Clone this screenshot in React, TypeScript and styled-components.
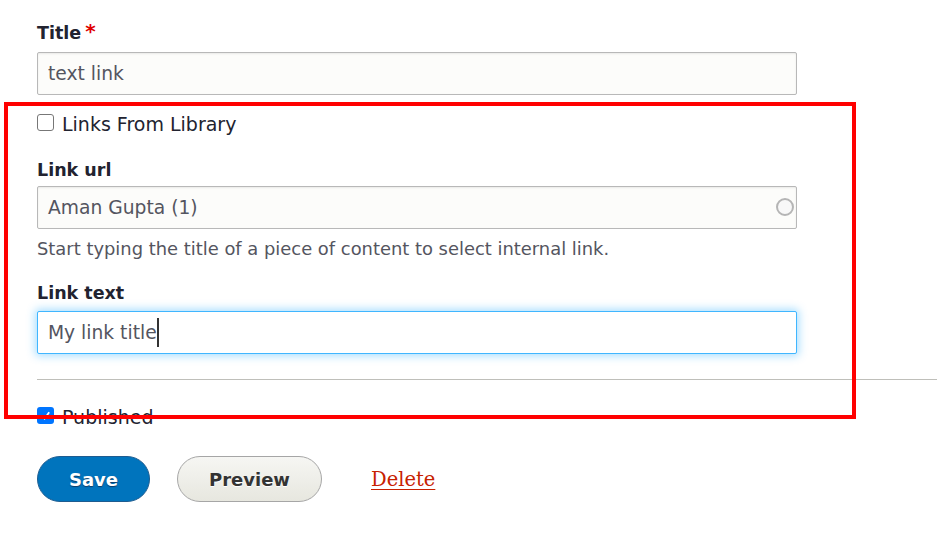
import React from "react";
import styled, { createGlobalStyle } from "styled-components";

const Global = createGlobalStyle`
  html, body { margin: 0; padding: 0; background: #fff; }
  body { font-family: "DejaVu Sans", "Liberation Sans", sans-serif; color: #222330; }
`;

const Page = styled.div`
  position: relative;
  width: 937px;
  height: 553px;
  overflow: hidden;
  padding: 21px 0 0 37px;
  box-sizing: border-box;
`;

const Field = styled.div<{ $mt?: number }>`
  display: flex;
  flex-direction: column;
  margin-top: ${(p) => p.$mt ?? 0}px;
`;

const Label = styled.label`
  font-size: 17.5px;
  font-weight: bold;
  line-height: 24px;
  color: #222330;
  display: flex;
  align-items: flex-start;
  gap: 4px;
`;

const Required = styled.span`
  color: #e00000;
  font-size: 20px;
  line-height: 20px;
`;

const InputBox = styled.div<{ $focus?: boolean; $mt: number }>`
  position: relative;
  width: 760px;
  height: 43px;
  box-sizing: border-box;
  margin-top: ${(p) => p.$mt}px;
  border: 1px solid ${(p) => (p.$focus ? "#40b6ff" : "#b8b8b8")};
  border-radius: 2px;
  background: ${(p) => (p.$focus ? "#fff" : "#fcfcfa")};
  box-shadow: ${(p) =>
    p.$focus ? "0 0 8px 2px rgba(64,182,255,0.45)" : "inset 0 1px 2px rgba(0,0,0,0.08)"};
  display: flex;
  align-items: center;
  padding: 0 10px;
  font-size: 18.7px;
  color: #545560;
`;

const Caret = styled.span`
  display: inline-block;
  width: 2px;
  height: 29px;
  background: #333;
`;

const Spinner = styled.span`
  position: absolute;
  right: 2px;
  top: 50%;
  margin-top: -10px;
  width: 14px;
  height: 14px;
  border: 2.5px solid #b5b5b5;
  border-radius: 50%;
  background: #f8f8f8;
`;

const CheckRow = styled.div<{ $mt: number }>`
  display: flex;
  align-items: center;
  gap: 8px;
  margin-top: ${(p) => p.$mt}px;
  font-size: 19px;
  color: #222330;
  line-height: 22px;
`;

const Box = styled.span<{ $checked?: boolean }>`
  width: 17px;
  height: 17px;
  box-sizing: border-box;
  border-radius: 3px;
  margin-bottom: 4px;
  border: ${(p) => (p.$checked ? "none" : "1.5px solid #777")};
  background: ${(p) => (p.$checked ? "#0075ff" : "#fff")};
  display: inline-flex;
  align-items: center;
  justify-content: center;
  flex: none;
`;

const Description = styled.div`
  margin-top: 9px;
  font-size: 17.9px;
  line-height: 22px;
  color: #545560;
`;

const Rule = styled.div`
  height: 1px;
  background: #bfbfba;
  margin-top: 25px;
`;

const Actions = styled.div`
  display: flex;
  align-items: center;
  margin-top: 28px;
`;

const Button = styled.button<{ $primary?: boolean }>`
  height: 46px;
  border-radius: 23px;
  font-family: "DejaVu Sans", sans-serif;
  font-weight: bold;
  font-size: 18px;
  padding: 0;
  margin-right: 27px;
  cursor: pointer;
  ${(p) =>
    p.$primary
      ? `width: 113px; background: #0074bd; color: #fff; border: 1px solid #1e5c90; text-shadow: 0 1px 1px #0d3b66;`
      : `width: 145px; background: linear-gradient(#f6f6f3, #e7e7df); color: #333; border: 1px solid #a6a6a6; text-shadow: 0 1px 0 #fff;`}
`;

const DeleteLink = styled.a`
  margin-left: 22px;
  color: #c72100;
  font-size: 19.5px;
  text-decoration: underline;
  text-underline-offset: 3px;
  font-family: "DejaVu Serif", "Liberation Serif", serif;
`;

const Annotation = styled.div`
  position: absolute;
  left: 4px;
  top: 102px;
  width: 852px;
  height: 317px;
  box-sizing: border-box;
  border: 4px solid #ff0000;
  pointer-events: none;
`;

export default function App() {
  return (
    <>
      <Global />
      <Page>
        <Field>
          <Label>
            Title<Required>*</Required>
          </Label>
          <InputBox $mt={7}>text link</InputBox>
        </Field>
        <CheckRow $mt={18}>
          <Box />
          Links From Library
        </CheckRow>
        <Field $mt={23}>
          <Label>Link url</Label>
          <InputBox $mt={4}>
            Aman Gupta (1)
            <Spinner />
          </InputBox>
        </Field>
        <Description>Start typing the title of a piece of content to select internal link.</Description>
        <Field $mt={21}>
          <Label>Link text</Label>
          <InputBox $focus $mt={6}>
            My link title
            <Caret />
          </InputBox>
        </Field>
        <Rule />
        <CheckRow $mt={26}>
          <Box $checked>
            <svg width="11" height="11" viewBox="0 0 12 12">
              <path d="M2 6.5 L5 9.5 L10 2.5" stroke="#fff" strokeWidth="2" fill="none" />
            </svg>
          </Box>
          Published
        </CheckRow>
        <Actions>
          <Button $primary>Save</Button>
          <Button>Preview</Button>
          <DeleteLink href="#">Delete</DeleteLink>
        </Actions>
        <Annotation />
      </Page>
    </>
  );
}
